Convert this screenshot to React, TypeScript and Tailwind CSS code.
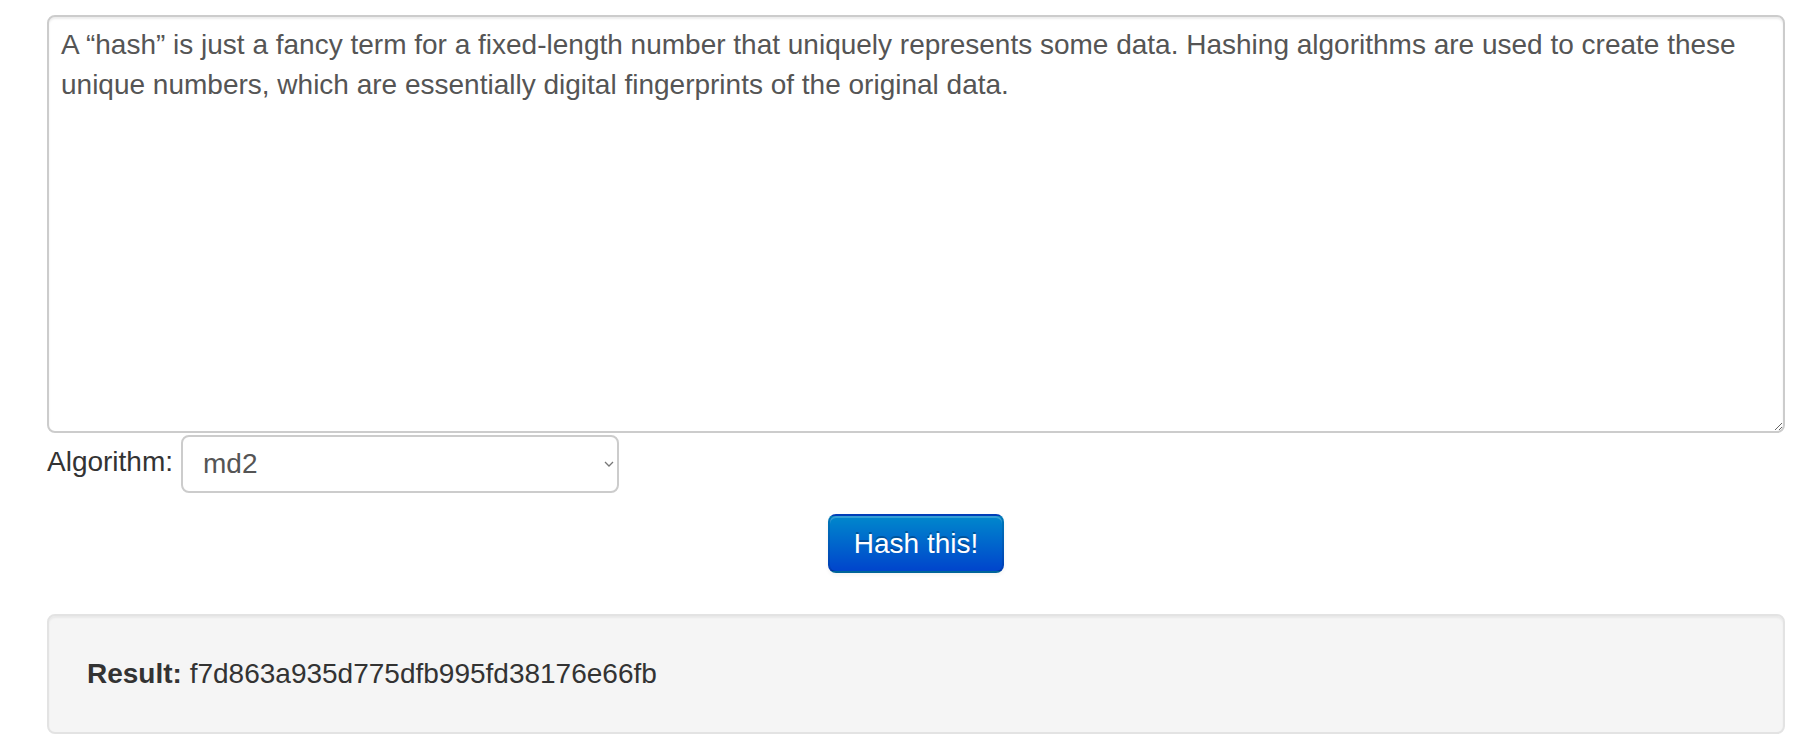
import React from "react";

const TEXT =
  "A \u201chash\u201d is just a fancy term for a fixed-length number that uniquely represents some data. Hashing algorithms are used to create these unique numbers, which are essentially digital fingerprints of the original data.";

export default function App() {
  return (
    <div
      className="min-h-[752px] w-[1806px] bg-white text-[28px] leading-[40px] text-[#333333]"
      style={{ fontFamily: '"Liberation Sans", Arial, Helvetica, sans-serif' }}
    >
      <div className="ml-[47px] w-[1738px] pt-[15px]">
        <textarea
          defaultValue={TEXT}
          className="block h-[418px] w-full resize rounded-[8px] border-2 border-[#cccccc] bg-white px-[12px] py-[8px] text-[28px] leading-[40px] text-[#555555] shadow-[inset_0_2px_2px_rgba(0,0,0,0.075)] outline-none"
          style={{ fontFamily: '"Liberation Sans", Arial, Helvetica, sans-serif' }}
        />
        <div className="mt-[2px] flex items-start gap-[8px]">
          <label className="mt-[7px] text-[#333333]">Algorithm:</label>
          <div className="relative h-[58px] w-[438px]">
            <select
              defaultValue="md2"
              className="h-full w-full appearance-none rounded-[8px] border-2 border-[#cccccc] bg-white pl-[20px] pr-[30px] text-[28px] leading-[40px] text-[#555555] outline-none"
              style={{ fontFamily: '"Liberation Sans", Arial, Helvetica, sans-serif' }}
            >
              <option value="md2">md2</option>
              <option value="md4">md4</option>
              <option value="md5">md5</option>
              <option value="sha1">sha1</option>
              <option value="sha256">sha256</option>
            </select>
            <svg
              className="pointer-events-none absolute right-[5px] top-[26px]"
              width="10"
              height="6"
              viewBox="0 0 10 6"
            >
              <path d="M1 1 L5 5 L9 1" fill="none" stroke="#777" strokeWidth="1.3" />
            </svg>
          </div>
        </div>
        <div className="mt-[21px] flex justify-center">
          <button
            type="button"
            className="h-[59px] rounded-[8px] border-2 border-[rgba(0,0,0,0.1)] border-b-[rgba(0,0,0,0.25)] bg-[linear-gradient(to_bottom,#0088cc,#0044cc)] px-[24px] text-[28px] leading-[40px] text-white shadow-[inset_0_2px_0_rgba(255,255,255,0.2),0_2px_4px_rgba(0,0,0,0.05)] [text-shadow:0_-2px_0_rgba(0,0,0,0.25)]"
            style={{ fontFamily: '"Liberation Sans", Arial, Helvetica, sans-serif' }}
          >
            Hash this!
          </button>
        </div>
        <div className="mt-[41px] min-h-[40px] rounded-[8px] border-2 border-[#e3e3e3] bg-[#f5f5f5] p-[38px] shadow-[inset_0_2px_2px_rgba(0,0,0,0.05)]">
          <b className="font-bold">Result:</b> f7d863a935d775dfb995fd38176e66fb
        </div>
      </div>
    </div>
  );
}
